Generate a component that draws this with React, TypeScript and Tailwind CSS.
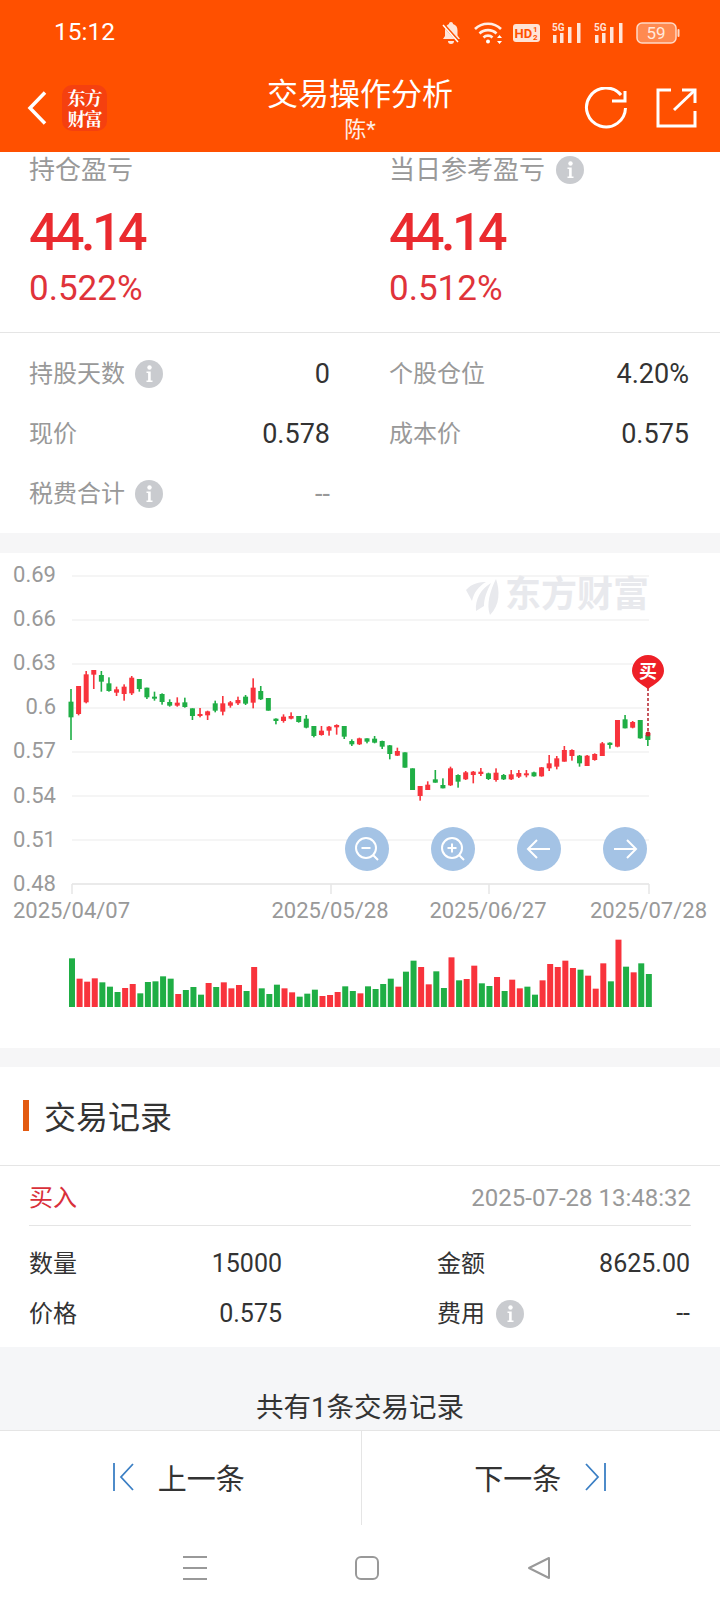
import type { ReactNode } from 'react';

// [color, wickTop, wickBottom, bodyTop, bodyBottom], read off the chart at 3x, y from 640
const candles: Array<[string, number, number, number, number]> = [
  ['g', 147, 300, 185, 232], ['r', 138, 226, 138, 222], ['r', 93, 190, 103, 187], ['r', 90, 147, 90, 104],
  ['g', 93, 155, 105, 125], ['g', 112, 155, 130, 153], ['r', 140, 168, 148, 158], ['r', 133, 182, 140, 162],
  ['r', 108, 165, 113, 160], ['g', 117, 155, 117, 147], ['g', 143, 177, 143, 172], ['g', 155, 182, 170, 176],
  ['g', 160, 194, 162, 186], ['g', 178, 200, 186, 197], ['r', 172, 200, 188, 197], ['g', 173, 203, 187, 201],
  ['g', 205, 240, 205, 228], ['r', 204, 232, 222, 228], ['r', 212, 240, 214, 226], ['g', 182, 217, 190, 212],
  ['r', 168, 226, 190, 215], ['r', 183, 203, 187, 197], ['r', 170, 195, 180, 190], ['g', 165, 195, 170, 191],
  ['r', 115, 205, 143, 188], ['g', 138, 180, 153, 178], ['g', 174, 212, 174, 212], ['g', 235, 253, 236, 243],
  ['r', 223, 248, 230, 243], ['r', 217, 238, 228, 236], ['g', 228, 248, 228, 246], ['g', 225, 265, 236, 263],
  ['g', 258, 292, 258, 288], ['r', 258, 287, 272, 285], ['r', 258, 287, 260, 272], ['r', 253, 284, 255, 262],
  ['g', 258, 297, 258, 290], ['g', 298, 318, 303, 313], ['r', 293, 315, 295, 313], ['g', 295, 310, 295, 305],
  ['g', 288, 310, 296, 308], ['g', 302, 327, 303, 320], ['g', 315, 358, 316, 342], ['r', 323, 348, 333, 347],
  ['g', 337, 383, 337, 383], ['g', 385, 450, 385, 450], ['r', 438, 482, 438, 468], ['r', 424, 450, 434, 450],
  ['g', 390, 428, 418, 428], ['g', 415, 445, 435, 445], ['r', 380, 438, 385, 436], ['g', 403, 443, 405, 425],
  ['r', 393, 420, 397, 418], ['r', 393, 430, 395, 405], ['r', 384, 408, 395, 402], ['g', 398, 420, 400, 417],
  ['r', 385, 425, 398, 420], ['g', 402, 420, 405, 418], ['r', 390, 420, 403, 418], ['r', 390, 414, 399, 410],
  ['r', 390, 412, 400, 406], ['g', 395, 410, 397, 409], ['r', 381, 410, 382, 409], ['r', 345, 393, 370, 385],
  ['r', 348, 388, 355, 380], ['r', 318, 365, 330, 365], ['r', 328, 362, 330, 348], ['g', 345, 380, 347, 370],
  ['r', 345, 378, 347, 378], ['r', 340, 362, 342, 360], ['r', 306, 348, 310, 348], ['g', 307, 326, 308, 315],
  ['r', 240, 322, 240, 320], ['g', 225, 265, 238, 265], ['r', 243, 265, 246, 263], ['g', 240, 296, 240, 295],
  ['g', 282, 318, 285, 300],
];

// [color, top], 3x, y from 920, baseline 261
const volumes: Array<[string, number]> = [
  ['g', 115], ['r', 176], ['r', 185], ['r', 175], ['g', 187], ['g', 200], ['g', 216], ['r', 204], ['r', 192], ['g', 220],
  ['g', 186], ['g', 184], ['g', 169], ['g', 176], ['r', 222], ['g', 210], ['g', 201], ['g', 224], ['r', 189], ['g', 201],
  ['r', 187], ['r', 205], ['r', 195], ['g', 213], ['r', 141], ['g', 205], ['g', 222], ['g', 194], ['r', 205], ['r', 217],
  ['g', 230], ['g', 221], ['g', 209], ['r', 228], ['r', 225], ['r', 216], ['g', 199], ['g', 213], ['r', 220], ['g', 199],
  ['g', 207], ['g', 192], ['g', 176], ['r', 200], ['g', 155], ['g', 122], ['r', 141], ['r', 193], ['g', 154], ['g', 204],
  ['r', 112], ['g', 181], ['r', 177], ['r', 137], ['g', 190], ['g', 198], ['r', 171], ['g', 213], ['r', 179], ['r', 205],
  ['g', 200], ['g', 224], ['r', 181], ['r', 132], ['r', 141], ['r', 122], ['r', 144], ['g', 149], ['r', 167], ['r', 206],
  ['r', 130], ['g', 184], ['r', 59], ['g', 140], ['r', 157], ['g', 130], ['g', 162],
];

const RED = '#f8333c';
const GREEN = '#1fae45';
const yLabels = ['0.69', '0.66', '0.63', '0.6', '0.57', '0.54', '0.51', '0.48'];
const dateLabels: Array<[number, string]> = [[72, '2025/04/07'], [331, '2025/05/28'], [489, '2025/06/27'], [649, '2025/07/28']];

function Info() {
  return (
    <svg width="28" height="28" viewBox="0 0 28 28" className="shrink-0">
      <circle cx="14" cy="14" r="14" fill="#c9cbcf" />
      <circle cx="14.500" cy="7.500" r="2.200" fill="#fff" />
      <path d="M11.500 11.500h4.200v9h1.800v1.500h-6v-1.500h1.600v-7.500h-1.600z" fill="#fff" />
    </svg>
  );
}

function StatusSignal() {
  return (
    <svg width="30" height="22" viewBox="0 0 30 22" fill="#fff" fillOpacity="0.85">
      <text x="0" y="9" fontSize="10" fontWeight="700" fontFamily="Roboto, sans-serif">5G</text>
      <rect x="1" y="13" width="3.500" height="8" />
      <rect x="8" y="11" width="3.500" height="10" />
      <rect x="16" y="5" width="3.500" height="16" />
      <rect x="25" y="1" width="3.500" height="20" />
    </svg>
  );
}

function StatusBar() {
  return (
    <div className="flex h-[64px] items-center justify-between pl-[54px] pr-[40px] pt-[1px] text-white">
      <span className="text-[24.500px] leading-none">15:12</span>
      <div className="flex items-center">
        <svg width="20" height="24" viewBox="0 0 20 24" fill="#fff" fillOpacity="0.85">
          <path d="M10 1c1.200 0 2 .8 2 2 3 .8 4.500 3.300 4.500 6.500v5l2.500 3.500H2l2-3V9.500C4 6.300 5.500 3.800 8 3c0-1.200.8-2 2-2z" />
          <path d="M7 20h6a3 3 0 0 1-6 0z" />
          <path d="M2 3l16 18" stroke="#ff5000" strokeWidth="3" />
          <path d="M2 4l15 17" stroke="#fff" strokeWidth="1.500" />
        </svg>
        <svg width="30" height="24" viewBox="0 0 30 24" fill="none" stroke="#fff" strokeOpacity="0.9" strokeWidth="2.600" className="ml-[12px]">
          <path d="M2 8c7-7 19-7 26 0" />
          <path d="M6.500 12.500c4.500-4.500 12.500-4.500 17 0" />
          <path d="M10.500 16.500c2.500-2.500 6.500-2.500 9 0" />
          <circle cx="15" cy="20.500" r="2" fill="#fff" stroke="none" />
          <path d="M24 17l2.500-3 2.500 3zM24 20l2.500 3 2.500-3z" fill="#fff" stroke="none" />
        </svg>
        <svg width="27" height="18" viewBox="0 0 27 18" className="ml-[10px]">
          <rect width="27" height="18" rx="3" fill="#ffe3d6" />
          <text x="1.500" y="14" fontSize="13" fontWeight="700" fill="#ff5000" fontFamily="Roboto, sans-serif">HD</text>
          <text x="20" y="8" fontSize="8" fontWeight="700" fill="#ff5000" fontFamily="Roboto, sans-serif">1</text>
          <text x="20" y="16" fontSize="8" fontWeight="700" fill="#ff5000" fontFamily="Roboto, sans-serif">2</text>
        </svg>
        <div className="ml-[12px]">
          <StatusSignal />
        </div>
        <div className="ml-[12px]">
          <StatusSignal />
        </div>
        <svg width="44" height="22" viewBox="0 0 44 22" className="ml-[12px]">
          <rect x="1" y="1" width="39" height="20" rx="5" fill="#ff8a50" stroke="#ffd9c6" strokeWidth="1.500" />
          <rect x="41.500" y="7" width="2" height="8" rx="1" fill="#ffd9c6" />
          <text x="20" y="17" textAnchor="middle" fontSize="17" fill="#ffe9de" fontFamily="Roboto, sans-serif">59</text>
        </svg>
      </div>
    </div>
  );
}

function TitleBar() {
  return (
    <div className="grid h-[88px] grid-cols-[1fr_auto_1fr] items-start text-white">
      <div className="flex items-center pl-[27px] pt-[21px]">
        <svg width="20" height="34" viewBox="0 0 20 34" fill="none" stroke="#fff" strokeWidth="3.500">
          <path d="M18 1.500L3 17l15 15.500" />
        </svg>
        <div className="ml-[15px] flex h-[46px] w-[45px] flex-col items-center justify-center rounded-[10px] bg-[#f5400f] font-['Noto_Serif_CJK_SC','Noto_Sans_CJK_SC',serif] text-[18px] font-bold leading-[21px] tracking-[-1px]">
          <span>东方</span>
          <span>财富</span>
        </div>
      </div>
      <div className="flex flex-col items-center">
        <span className="mt-[15px] text-[31px] leading-[32px]">交易操作分析</span>
        <span className="mt-[6px] text-[22px] leading-[26px] text-white/90">陈*</span>
      </div>
      <div className="flex justify-end pr-[23px] pt-[23px]">
        <svg width="44" height="42" viewBox="0 0 44 42" fill="none" stroke="#fff" strokeWidth="3">
          <path d="M42.500 21A19.500 19.500 0 1 1 38 8" />
          <path d="M29 14h13V4" />
        </svg>
        <svg width="42" height="42" viewBox="0 0 42 42" fill="none" stroke="#fff" strokeWidth="3" className="ml-[28px]">
          <path d="M16 3H3v36h37V24" />
          <path d="M19 23L40 3" />
          <path d="M27 3h13v13" />
        </svg>
      </div>
    </div>
  );
}

function DetailRow({ label, value, info, muted }: { label: string; value: string; info?: boolean; muted?: boolean }) {
  return (
    <div className="flex h-[60px] items-center justify-between">
      <span className="flex items-center text-[24px] text-[#999]">
        {label}
        {info && <span className="ml-[10px]"><Info /></span>}
      </span>
      <span className={muted ? 'text-[27px] text-[#999]' : 'text-[27px] text-[#333]'}>{value}</span>
    </div>
  );
}

function Profit({ label, value, percent, info }: { label: string; value: string; percent: string; info?: boolean }) {
  return (
    <div>
      <div className="flex h-[36px] items-center text-[26px] text-[#999]">
        {label}
        {info && <span className="ml-[11px]"><Info /></span>}
      </div>
      <div className="mt-[15px] h-[60px] text-[52px] font-medium leading-[60px] tracking-[-3.500px] text-[#ea2a2f]">{value}</div>
      <div className="mt-[6px] h-[40px] text-[35px] leading-[40px] text-[#e0333a]">{percent}</div>
    </div>
  );
}

function RoundButton({ children }: { children: ReactNode }) {
  return (
    <div className="flex h-[44px] w-[44px] items-center justify-center rounded-full bg-[#a4c3e5]">
      <svg width="30" height="30" viewBox="0 0 30 30" fill="none" stroke="#fff" strokeWidth="2">
        {children}
      </svg>
    </div>
  );
}

function Chart() {
  return (
    <div className="relative h-[495px] bg-white">
      <svg width="720" height="495" viewBox="0 0 720 495" className="block">
        {yLabels.map((l, i) => (
          <g key={l}>
            <line x1="72" x2="649" y1={23 + i * 44} y2={23 + i * 44} stroke="#f2f2f2" strokeWidth="1.500" />
            <text x="56" y={29 + i * 44.100} textAnchor="end" fontSize="22" fill="#999">{l}</text>
          </g>
        ))}
        <text x="505" y="54" fontSize="36" fontWeight="700" fill="#e8e9ed">东方财富</text>
        <g fill="#e8e9ed">
          <path d="M466 37c6-7 14-8 20-8-7 4-12 10-14 19z" />
          <path d="M476 58c-1-12 5-22 15-28-4 8-7 15-7 23z" />
          <path d="M490 62c-4-10 0-24 6-36 4 12 4 26-6 36z" />
        </g>
        {dateLabels.map(([x, l]) => (
          <g key={l}>
            <line x1={x} x2={x} y1="331" y2="341" stroke="#e6e6e6" strokeWidth="1.500" />
            <text x={x === 72 ? 13 : x === 649 ? 707 : x - 1} y="365" textAnchor={x === 72 ? 'start' : x === 649 ? 'end' : 'middle'} fontSize="22" fill="#999">{l}</text>
          </g>
        ))}
        <line x1="72" x2="649" y1="331" y2="331" stroke="#e6e6e6" strokeWidth="1.500" />
        {candles.map(([c, wt, wb, bt, bb], i) => {
          const x = 71 + i * 7.59;
          const fill = c === 'r' ? RED : GREEN;
          return (
            <g key={i} fill={fill}>
              <rect x={x - 0.8} y={87 + wt / 3} width="1.600" height={(wb - wt) / 3} />
              <rect x={x - 2.500} y={87 + bt / 3} width="5" height={Math.max((bb - bt) / 3, 1)} />
            </g>
          );
        })}
        {volumes.map(([c, top], i) => (
          <rect
            key={i}
            x={69 + i * 7.59}
            y={367 + top / 3}
            width="6"
            height={(261 - top) / 3}
            fill={c === 'r' ? RED : GREEN}
          />
        ))}
        <line x1="648" x2="648" y1="135" y2="181" stroke="#b5202a" strokeWidth="1.500" strokeDasharray="3 2" />
        <circle cx="648" cy="181" r="2.500" fill="#c8202a" />
        <path d="M632 118a16 16 0 1 1 32 0c0 8-9 13-16 18-7-5-16-10-16-18z" fill="#ee2027" />
        <text x="648" y="125" textAnchor="middle" fontSize="18" fontWeight="700" fill="#fff">买</text>
      </svg>
      <div className="absolute left-[345px] top-[274px] flex gap-[42px]">
        <RoundButton>
          <circle cx="14" cy="14" r="10" />
          <path d="M9.500 14h9M21 21l5 5" />
        </RoundButton>
        <RoundButton>
          <circle cx="14" cy="14" r="10" />
          <path d="M9.500 14h9M14 9.500v9M21 21l5 5" />
        </RoundButton>
        <RoundButton>
          <path d="M26 15H4M13 6l-9 9 9 9" />
        </RoundButton>
        <RoundButton>
          <path d="M4 15h22M17 6l9 9-9 9" />
        </RoundButton>
      </div>
    </div>
  );
}

function TradePair({ label, value, info }: { label: string; value: string; info?: boolean }) {
  return (
    <div className="flex h-[50px] items-center justify-between">
      <span className="flex items-center text-[24px] text-[#333]">
        {label}
        {info && <span className="ml-[11px]"><Info /></span>}
      </span>
      <span className="text-[25px] text-[#333]">{value}</span>
    </div>
  );
}

export default function App() {
  return (
    <div className="flex h-[1612px] w-[720px] flex-col overflow-hidden bg-white font-['Roboto','Noto_Sans_CJK_SC',sans-serif]">
      <header className="h-[152px] bg-[#ff5000]">
        <StatusBar />
        <TitleBar />
      </header>

      <section className="grid h-[181px] grid-cols-[360px_1fr] border-b border-[#e5e5e5] pl-[29px]">
        <Profit label="持仓盈亏" value="44.14" percent="0.522%" />
        <Profit label="当日参考盈亏" value="44.14" percent="0.512%" info />
      </section>

      <section className="grid h-[200px] grid-cols-[301px_300px] content-start gap-x-[59px] px-[29px] pt-[11px]">
        <DetailRow label="持股天数" value="0" info />
        <DetailRow label="个股仓位" value="4.20%" />
        <DetailRow label="现价" value="0.578" />
        <DetailRow label="成本价" value="0.575" />
        <DetailRow label="税费合计" value="--" info muted />
      </section>

      <div className="h-[20px] bg-[#f6f6f7]" />
      <Chart />
      <div className="h-[19px] bg-[#f6f6f7]" />

      <section className="h-[280px]">
        <div className="flex h-[99px] items-center border-b border-[#e5e5e5] pl-[23px] pb-[2px]">
          <span className="h-[31px] w-[6px] bg-[#e35a10]" />
          <span className="ml-[15px] translate-y-[3px] text-[32px] text-[#333]">交易记录</span>
        </div>
        <div className="mx-[29px] flex h-[60px] items-center justify-between border-b border-[#e5e5e5] pt-[4px] text-[24px]">
          <span className="text-[#d9303a]">买入</span>
          <span className="text-[24px] text-[#999]">2025-07-28 13:48:32</span>
        </div>
        <div className="grid grid-cols-[253px_253px] gap-x-[155px] px-[29px] pt-[13px]">
          <TradePair label="数量" value="15000" />
          <TradePair label="金额" value="8625.00" />
          <TradePair label="价格" value="0.575" />
          <TradePair label="费用" value="--" info />
        </div>
      </section>

      <div className="flex h-[83px] items-end justify-center bg-[#f5f6f8] pb-[2px] text-[27.500px] leading-[40px] text-[#333]">
        共有1条交易记录
      </div>

      <footer className="flex h-[95px] border-t border-[#e5e5e5]">
        <div className="flex flex-1 items-center justify-center border-r border-[#e5e5e5] pb-[3px] pr-[3px]">
          <svg width="22" height="28" viewBox="0 0 22 28" fill="none" stroke="#3b7fc4" strokeWidth="1.800">
            <path d="M1 0v28M20 1L8 14l12 13" />
          </svg>
          <span className="ml-[23px] translate-y-[4px] text-[29px] text-[#333]">上一条</span>
        </div>
        <div className="flex flex-1 items-center justify-center pb-[3px] pr-[1px]">
          <span className="mr-[23px] translate-y-[4px] text-[29px] text-[#333]">下一条</span>
          <svg width="22" height="28" viewBox="0 0 22 28" fill="none" stroke="#3b7fc4" strokeWidth="1.800">
            <path d="M21 0v28M2 1l12 13L2 27" />
          </svg>
        </div>
      </footer>

      <nav className="flex flex-1 items-start justify-between pl-[183px] pr-[170px] pt-[31px]">
        <svg width="24" height="24" viewBox="0 0 24 24" fill="none" stroke="#999" strokeWidth="2">
          <path d="M0 1h24M0 12h24M0 23h24" />
        </svg>
        <svg width="24" height="24" viewBox="0 0 24 24" fill="none" stroke="#999" strokeWidth="2">
          <rect x="1" y="1" width="22" height="22" rx="5" />
        </svg>
        <svg width="23" height="24" viewBox="0 0 23 24" fill="none" stroke="#999" strokeWidth="2" strokeLinejoin="round">
          <path d="M22 2v20L2 12z" />
        </svg>
      </nav>
    </div>
  );
}
